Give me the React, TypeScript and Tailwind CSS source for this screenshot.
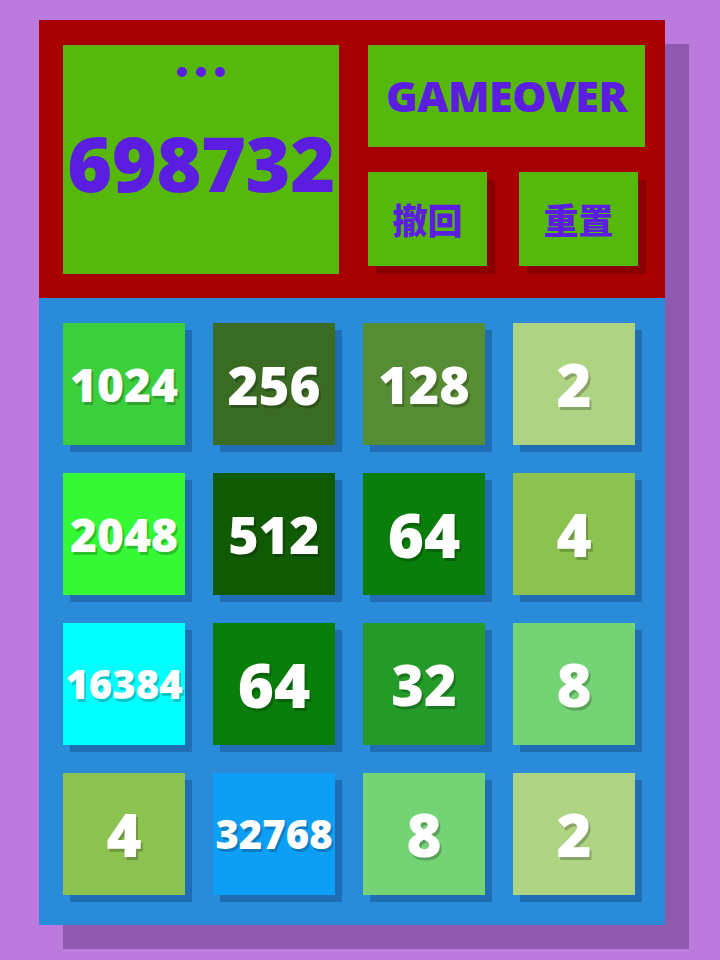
const tiles: { v: string; bg: string; size: string }[] = [
  { v: "1024", bg: "bg-[#3ccf3c]", size: "text-[46px]" },
  { v: "256", bg: "bg-[#3a6b22]", size: "text-[53px]" },
  { v: "128", bg: "bg-[#568c33]", size: "text-[52px]" },
  { v: "2", bg: "bg-[#add383]", size: "text-[60px]" },
  { v: "2048", bg: "bg-[#36f936]", size: "text-[46px]" },
  { v: "512", bg: "bg-[#0f5a03]", size: "text-[52px]" },
  { v: "64", bg: "bg-[#0a7e0a]", size: "text-[62px]" },
  { v: "4", bg: "bg-[#8cc24f]", size: "text-[60px]" },
  { v: "16384", bg: "bg-[#00ffff]", size: "text-[40px]" },
  { v: "64", bg: "bg-[#0a7e0a]", size: "text-[62px]" },
  { v: "32", bg: "bg-[#249a28]", size: "text-[56px]" },
  { v: "8", bg: "bg-[#74d374]", size: "text-[60px]" },
  { v: "4", bg: "bg-[#8cc24f]", size: "text-[60px]" },
  { v: "32768", bg: "bg-[#0d9ef5]", size: "text-[40px]" },
  { v: "8", bg: "bg-[#74d374]", size: "text-[60px]" },
  { v: "2", bg: "bg-[#add383]", size: "text-[60px]" },
];

const font = "font-['Open_Sans','Noto_Sans_CJK_SC',sans-serif]";

export default function App() {
  return (
    <div className={`min-h-[960px] w-[720px] bg-[#bd7ade] pt-[20px] pl-[39px] ${font}`}>
      <div className="w-[626px] shadow-[24px_24px_0_#8f59ad]">
        {/* header */}
        <div className="flex h-[278px] gap-[29px] bg-[#a80000] pt-[25px] pl-[24px]">
          <div className="flex h-[229px] w-[276px] flex-col items-center bg-[#55b80a]">
            <div className="mt-[22px] flex gap-[9px]">
              <span className="h-[10px] w-[10px] rounded-full bg-[#5b1ddf]" />
              <span className="h-[10px] w-[10px] rounded-full bg-[#5b1ddf]" />
              <span className="h-[10px] w-[10px] rounded-full bg-[#5b1ddf]" />
            </div>
            <div className="mt-[47px] text-[77px] font-extrabold leading-none tracking-[-0.5px] text-[#5b1ddf]">
              698732
            </div>
          </div>
          <div className="flex w-[277px] flex-col">
            <div className="flex h-[102px] items-center justify-center bg-[#55b80a] text-[43px] font-extrabold tracking-[-0.5px] text-[#5b1ddf]">
              GAMEOVER
            </div>
            <div className="mt-[25px] flex gap-[32px]">
              <button className="flex h-[94px] w-[119px] items-center justify-center bg-[#55b80a] font-['Noto_Sans_CJK_SC',sans-serif] text-[35px] font-black text-[#5b1ddf] shadow-[8px_8px_0_#880000]">
                撤回
              </button>
              <button className="flex h-[94px] w-[119px] items-center justify-center bg-[#55b80a] font-['Noto_Sans_CJK_SC',sans-serif] text-[35px] font-black text-[#5b1ddf] shadow-[8px_8px_0_#880000]">
                重置
              </button>
            </div>
          </div>
        </div>
        {/* board */}
        <div className="grid grid-cols-[repeat(4,122px)] gap-[28px] bg-[#2a8bd8] pt-[25px] pr-[30px] pb-[30px] pl-[24px]">
          {tiles.map((t, i) => (
            <div
              key={i}
              className={`flex h-[122px] w-[122px] items-center justify-center ${t.bg} shadow-[7px_7px_0_#1f6db3]`}
            >
              <span
                className={`${t.size} font-extrabold leading-none text-white [text-shadow:2px_3px_0_rgba(0,0,0,0.22)]`}
              >
                {t.v}
              </span>
            </div>
          ))}
        </div>
      </div>
    </div>
  );
}
